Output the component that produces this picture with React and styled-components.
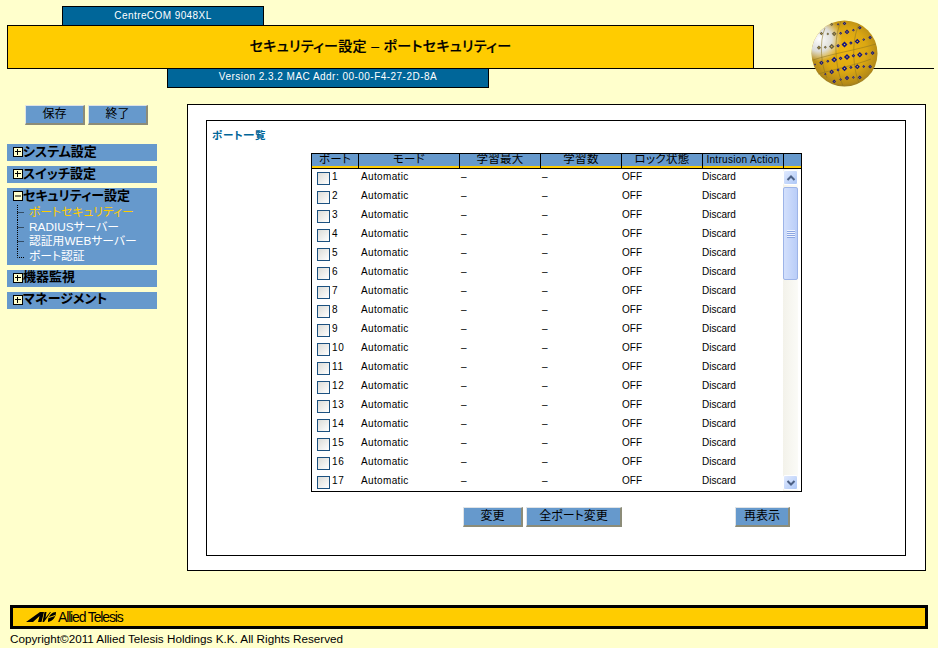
import React from "react";
import styled, { createGlobalStyle } from "styled-components";

const jp = `"Liberation Sans", "Noto Sans CJK JP", sans-serif`;

const Global = createGlobalStyle`
  html, body { margin: 0; padding: 0; background: #ffffcc; }
  #root { width: 938px; height: 648px; overflow: hidden; }
`;

const Page = styled.div`
  width: 938px;
  height: 648px;
  background: #ffffcc;
  font-family: ${jp};
  font-feature-settings: "palt";
  color: #000;
  padding-top: 6px;
  box-sizing: border-box;
  position: relative;
`;

const Header = styled.header`
  display: flex;
  flex-direction: column;
  height: 82px;
  position: relative;
`;

const ModelTab = styled.div`
  width: 202px;
  height: 19px;
  margin-left: 62px;
  box-sizing: border-box;
  border: 1px solid #000;
  border-bottom: 0;
  background: #006699;
  color: #fff;
  font-size: 10px;
  letter-spacing: 0.42px;
  line-height: 17px;
  text-align: center;
`;

const TitleRow = styled.div`
  display: flex;
  width: 934px;
  height: 44px;
  box-sizing: border-box;
  padding-left: 7px;
`;

const TitleBar = styled.h1`
  width: 747px;
  height: 44px;
  margin: 0;
  box-sizing: border-box;
  border: 1px solid #000;
  background: #ffcc00;
  font-size: 14px;
  font-weight: 500;
  letter-spacing: 0.35px;
  line-height: 40px;
  text-align: center;
  -webkit-text-stroke: 0.2px #000;
`;

const TitleLine = styled.div`
  flex: 1;
  height: 44px;
  box-sizing: border-box;
  border-bottom: 1px solid #000;
`;

const VersionTab = styled.div`
  width: 322px;
  height: 19px;
  margin-left: 167px;
  box-sizing: border-box;
  border: 1px solid #000;
  border-top: 0;
  background: #006699;
  color: #fff;
  font-size: 10px;
  letter-spacing: 0.47px;
  line-height: 16px;
  text-align: center;
`;

const GlobeWrap = styled.div`
  position: absolute;
  left: 811px;
  top: 14px;
  width: 67px;
  height: 67px;
`;

const Content = styled.div`
  display: flex;
  height: 517px;
  padding-top: 16px;
  box-sizing: border-box;
`;

const Sidebar = styled.nav`
  width: 187px;
  flex: none;
  padding-left: 7px;
  box-sizing: border-box;
`;

const SideButtons = styled.div`
  display: flex;
  gap: 3px;
  margin: 1px 0 19px 18px;
`;

const Button = styled.button`
  width: ${(p) => p.$w}px;
  height: 20px;
  padding: 0;
  box-sizing: border-box;
  background: #6699cc;
  border-style: solid;
  border-width: 1px 2px 2px 1px;
  border-color: #dfe3e6 #8c8c78 #8c8c78 #dfe3e6;
  font-family: ${jp};
  font-feature-settings: "palt";
  font-size: 12px;
  color: #000;
  line-height: 15px;
`;

const Menu = styled.div`
  display: flex;
  flex-direction: column;
  gap: 5px;
  width: 150px;
`;

const MenuGroup = styled.div`
  background: #6699cc;
  min-height: 17px;
`;

const MenuHead = styled.div`
  display: flex;
  align-items: center;
  height: 17px;
  padding: 0 0 1px 6px;
  box-sizing: border-box;
  font-size: 13px;
  font-weight: 700;
`;

const HeadLabel = styled.span`
  line-height: 15px;
  margin-bottom: 2px;
`;

const SubList = styled.ul`
  list-style: none;
  margin: 0;
  padding: 0 0 1px 6px;
`;

const SubItem = styled.li`
  display: flex;
  align-items: center;
  height: 14.7px;
  font-size: 11.8px;
  color: ${(p) => (p.$active ? "#ffcc00" : "#fff")};
`;

const SubLabel = styled.span`
  line-height: 14px;
  margin-bottom: 1px;
`;

const Panel = styled.main`
  width: 739px;
  height: 467px;
  box-sizing: border-box;
  border: 1px solid #000;
  background: #fff;
  padding: 15px 19px 14px 18px;
`;

const InnerPanel = styled.section`
  height: 436px;
  box-sizing: border-box;
  border: 1px solid #000;
  padding: 8px 0 0 5px;
`;

const SectionTitle = styled.h2`
  margin: 0;
  height: 24px;
  font-size: 10.5px;
  font-weight: 700;
  letter-spacing: 0.8px;
  line-height: 13px;
  color: #006699;
`;

const TableBox = styled.div`
  width: 491px;
  height: 339px;
  margin-left: 99px;
  box-sizing: border-box;
  border: 1px solid #000;
  display: flex;
  flex-direction: column;
`;

const HeadRow = styled.div`
  display: grid;
  grid-template-columns: 47px 101px 81px 81px 81px 81px 1fr;
  height: 14px;
  flex: none;
  box-sizing: border-box;
  background: #6699cc;
  border-bottom: 2px solid #ffcc00;
`;

const HeadCell = styled.div`
  border-right: ${(p) => (p.$last ? "0" : "1px solid #000")};
  font-size: ${(p) => (p.$latin ? "10px" : "11.5px")};
  letter-spacing: 0.3px;
  line-height: 11px;
  text-align: center;
  height: 14px;
  box-sizing: border-box;
  white-space: nowrap;
  overflow: hidden;
`;

const HeadRule = styled.div`
  height: 1px;
  flex: none;
  background: #000;
`;

const BodyRow = styled.div`
  display: flex;
  flex: 1;
  min-height: 0;
`;

const Rows = styled.div`
  width: 471px;
  flex: none;
  overflow: hidden;
`;

const Row = styled.div`
  display: grid;
  grid-template-columns: 47px 101px 81px 81px 80px 60px;
  height: 19px;
  align-items: start;
  font-size: 10px;
  line-height: 16px;
`;

const PortCell = styled.div`
  display: flex;
  align-items: flex-start;
  padding-left: 5px;
  gap: 2px;
  letter-spacing: 0.6px;
`;

const Check = styled.span`
  display: block;
  width: 13px;
  height: 13px;
  margin-top: 3px;
  box-sizing: border-box;
  border: 1px solid #1c5180;
  background: linear-gradient(135deg, #dcdcd7, #ffffff);
`;

const Cell = styled.div`
  padding-left: ${(p) => p.$pad ?? 1}px;
  letter-spacing: ${(p) => p.$ls ?? 0}px;
`;

const Scrollbar = styled.div`
  width: 15px;
  display: flex;
  flex-direction: column;
  background: linear-gradient(90deg, #f3f2ea, #fbfbf7);
  padding: 1px 0;
  box-sizing: border-box;
`;

const ScrollArrow = styled.div`
  width: 15px;
  height: 15px;
  box-sizing: border-box;
  border: 1px solid #fff;
  border-radius: 2px;
  background: linear-gradient(135deg, #e1eafe, #aec8f7);
  display: flex;
  align-items: center;
  justify-content: center;
`;

const ScrollThumb = styled.div`
  width: 15px;
  height: 93px;
  margin: 2px 0 auto;
  box-sizing: border-box;
  border: 1px solid #9db4e8;
  border-radius: 2px;
  background: linear-gradient(90deg, #d3e0fc, #b9cdf8);
  display: flex;
  align-items: center;
  justify-content: center;
`;

const Actions = styled.div`
  display: flex;
  margin: 15px 0 0 251px;
  gap: 3px;
`;

const Reload = styled(Button)`
  margin-left: 110px;
`;

const Footer = styled.footer`
  position: absolute;
  left: 10px;
  top: 605px;
  width: 918px;
`;

const FooterBar = styled.div`
  height: 24px;
  box-sizing: border-box;
  border: 3px solid #000;
  background: #ffcc00;
  display: flex;
  align-items: center;
  padding-left: 13px;
`;

const Brand = styled.span`
  font-size: 14px;
  letter-spacing: -1.15px;
  margin-left: 2px;
`;

const Copyright = styled.div`
  margin-top: 3px;
  font-size: 11.7px;
  line-height: 14px;
`;

const Box = ({ open }) => (
  <svg width="10" height="10" viewBox="0 0 10 10" style={{ flex: "none" }}>
    <rect x="0.5" y="0.5" width="9" height="9" fill="#ffffcc" stroke="#000" />
    <path d={open ? "M2 5H8" : "M2 4.5H8M4.5 2V8"} stroke="#000" fill="none" />
  </svg>
);

const Branch = ({ last }) => (
  <svg width="16" height="15" viewBox="0 0 16 15" style={{ flex: "none" }}>
    <path
      d={last ? "M4.5 0V8.5H11" : "M4.5 0V15M4.5 7.5H11"}
      stroke="#000"
      strokeDasharray="1 1"
      fill="none"
    />
  </svg>
);

const Chevron = ({ down }) => (
  <svg width="10" height="8" viewBox="0 0 10 8">
    <path
      d={down ? "M1.5 2L5 5.5L8.5 2" : "M1.5 6L5 2.5L8.5 6"}
      stroke="#4d6185"
      strokeWidth="2"
      fill="none"
    />
  </svg>
);

const Grip = () => (
  <svg width="8" height="8" viewBox="0 0 8 8">
    <path d="M0 .5H8M0 2.5H8M0 4.5H8M0 6.5H8" stroke="#eef3fe" />
    <path d="M0 1.5H8M0 3.5H8M0 5.5H8M0 7.5H8" stroke="#8ca6e2" />
  </svg>
);

const Logo = () => (
  <svg width="30" height="10" viewBox="0 0 30 10" style={{ flex: "none" }}>
    <path d="M0 10L14 0H18L15.5 10H12L13.5 4L7 10Z" fill="#000" />
    <path d="M18.5 0H20.5L19.5 6L24 0H25L18 10H16.5Z" fill="#000" />
    <path d="M22 8C23 3 26 0 30 0C30 5 27 9 22 10Z" fill="#000" />
    <path d="M23 5.5L29 3.5" stroke="#ffcc00" />
  </svg>
);

const Globe = () => {
  const rows = [-30, -21, -9, 4, 15, 25];
  const marks = [];
  rows.forEach((dy, r) => {
    for (let i = -6; i <= 6; i++) {
      const dx = i * 6.4 + (r % 2) * 2.5;
      const x = 33.5 + dx;
      const y = 33.5 + dy - dx * 0.2 + dx * dx * 0.004 * (dy / 12);
      const d2 = dx * dx + (y - 33.5) ** 2;
      if (d2 > 32 * 32) continue;
      const fade = 1 - d2 / (33 * 33);
      const s = (Math.abs(i) % 2 ? 1.7 : 2.8) * (0.55 + 0.55 * fade);
      const lit = x < 24 && y < 28;
      marks.push(
        <g key={`${r}-${i}`}>
          <path
            d={`M${x} ${y - s}L${x + s} ${y}L${x} ${y + s}L${x - s} ${y}Z`}
            fill={lit ? "#6a6040" : "#14147c"}
          />
          <circle cx={x} cy={y} r={s * 0.25} fill="#e8c040" />
        </g>
      );
    }
  });
  return (
    <svg width="67" height="67" viewBox="0 0 67 67">
      <defs>
        <radialGradient id="gb" cx="0.5" cy="0.45" r="0.6">
          <stop offset="0" stopColor="#eeb610" />
          <stop offset="0.55" stopColor="#dba712" />
          <stop offset="0.85" stopColor="#b48a18" />
          <stop offset="1" stopColor="#786a34" />
        </radialGradient>
        <radialGradient id="hl" cx="0.12" cy="0.28" r="0.34">
          <stop offset="0" stopColor="#ffffff" />
          <stop offset="0.55" stopColor="#dfe4ee" stopOpacity="0.9" />
          <stop offset="1" stopColor="#dfe4ee" stopOpacity="0" />
        </radialGradient>
      </defs>
      <circle cx="33.5" cy="33.5" r="33" fill="url(#gb)" />
      <circle cx="33.5" cy="33.5" r="33" fill="url(#hl)" />
      <path
        d="M2 40C20 34 45 30 65 24M7 54C25 49 48 44 60 39M30 1C22 20 24 45 32 66M48 4C40 22 42 48 48 63M14 8C8 22 10 45 16 58"
        stroke="#8c7420"
        strokeOpacity="0.55"
        fill="none"
      />
      {marks}
    </svg>
  );
};

const data = Array.from({ length: 17 }, (_, i) => i + 1);
const heads = ["ポート", "モード", "学習最大", "学習数", "ロック状態"];

export default function App() {
  return (
    <Page>
      <Global />
      <Header>
        <ModelTab>CentreCOM 9048XL</ModelTab>
        <TitleRow>
          <TitleBar>セキュリティー設定 – ポートセキュリティー</TitleBar>
          <TitleLine />
        </TitleRow>
        <VersionTab>Version 2.3.2 MAC Addr: 00-00-F4-27-2D-8A</VersionTab>
        <GlobeWrap>
          <Globe />
        </GlobeWrap>
      </Header>
      <Content>
        <Sidebar>
          <SideButtons>
            <Button $w={60}>保存</Button>
            <Button $w={60}>終了</Button>
          </SideButtons>
          <Menu>
            <MenuGroup>
              <MenuHead><Box /><HeadLabel>システム設定</HeadLabel></MenuHead>
            </MenuGroup>
            <MenuGroup>
              <MenuHead><Box /><HeadLabel>スイッチ設定</HeadLabel></MenuHead>
            </MenuGroup>
            <MenuGroup>
              <MenuHead><Box open /><HeadLabel>セキュリティー設定</HeadLabel></MenuHead>
              <SubList>
                <SubItem $active><Branch /><SubLabel>ポートセキュリティー</SubLabel></SubItem>
                <SubItem><Branch /><SubLabel>RADIUSサーバー</SubLabel></SubItem>
                <SubItem><Branch /><SubLabel>認証用WEBサーバー</SubLabel></SubItem>
                <SubItem><Branch last /><SubLabel>ポート認証</SubLabel></SubItem>
              </SubList>
            </MenuGroup>
            <MenuGroup>
              <MenuHead><Box /><HeadLabel>機器監視</HeadLabel></MenuHead>
            </MenuGroup>
            <MenuGroup>
              <MenuHead><Box /><HeadLabel>マネージメント</HeadLabel></MenuHead>
            </MenuGroup>
          </Menu>
        </Sidebar>
        <Panel>
          <InnerPanel>
            <SectionTitle>ポート一覧</SectionTitle>
            <TableBox>
              <HeadRow>
                {heads.map((h) => (
                  <HeadCell key={h}>{h}</HeadCell>
                ))}
                <HeadCell $latin>Intrusion Action</HeadCell>
                <HeadCell $last />
              </HeadRow>
              <HeadRule />
              <BodyRow>
                <Rows>
                  {data.map((n) => (
                    <Row key={n}>
                      <PortCell><Check />{n}</PortCell>
                      <Cell $pad={2} $ls={0.35}>Automatic</Cell>
                      <Cell>–</Cell>
                      <Cell>–</Cell>
                      <Cell $pad={0}>OFF</Cell>
                      <Cell $pad={0}>Discard</Cell>
                    </Row>
                  ))}
                </Rows>
                <Scrollbar>
                  <ScrollArrow><Chevron /></ScrollArrow>
                  <ScrollThumb><Grip /></ScrollThumb>
                  <ScrollArrow><Chevron down /></ScrollArrow>
                </Scrollbar>
              </BodyRow>
            </TableBox>
            <Actions>
              <Button $w={60}>変更</Button>
              <Button $w={96}>全ポート変更</Button>
              <Reload $w={55}>再表示</Reload>
            </Actions>
          </InnerPanel>
        </Panel>
      </Content>
      <Footer>
        <FooterBar>
          <Logo />
          <Brand>Allied Telesis</Brand>
        </FooterBar>
        <Copyright>Copyright©2011 Allied Telesis Holdings K.K. All Rights Reserved</Copyright>
      </Footer>
    </Page>
  );
}
